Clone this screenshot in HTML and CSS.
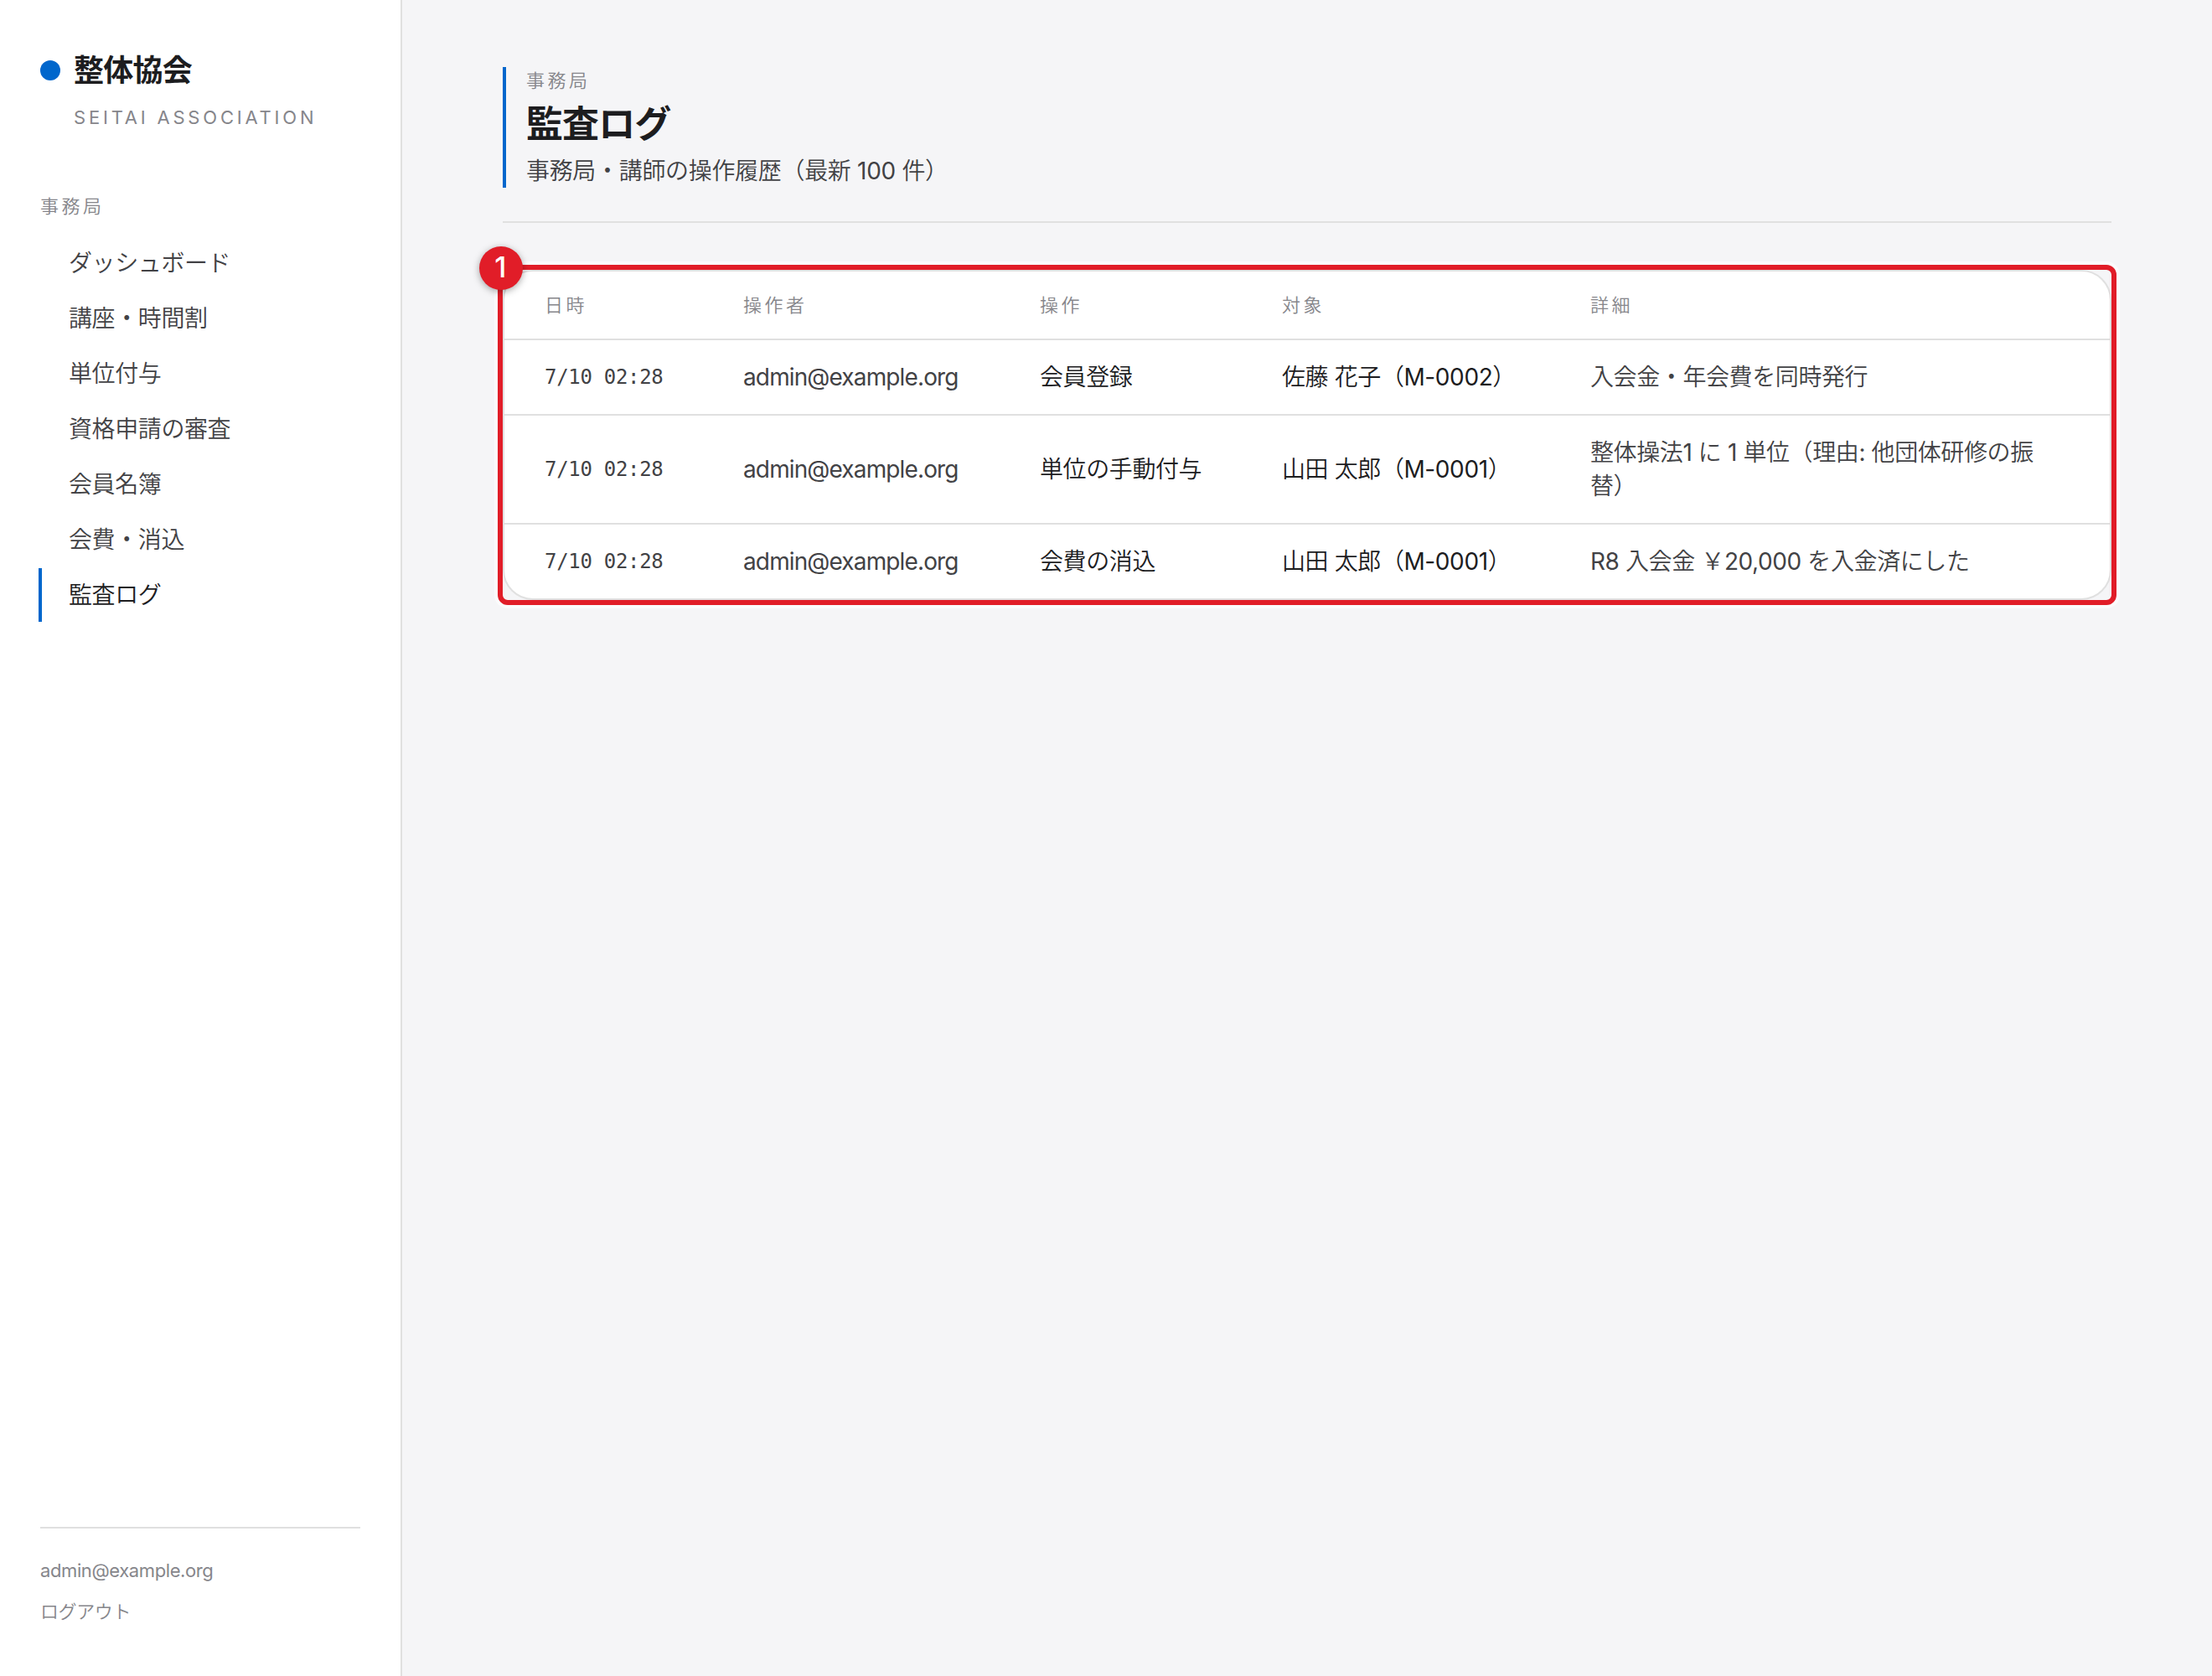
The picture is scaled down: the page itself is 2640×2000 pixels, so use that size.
FILE: index.html
```html
<!DOCTYPE html>
<html lang="ja">
<head>
<meta charset="utf-8">
<title>監査ログ</title>
<link rel="stylesheet" href="styles.css">
</head>
<body>
<div class="app">
  <aside class="sidebar">
    <div class="brand">
      <span class="brand-dot"></span>
      <span class="brand-name">整体協会</span>
    </div>
    <div class="brand-sub">SEITAI ASSOCIATION</div>
    <div class="nav-label">事務局</div>
    <nav class="nav">
      <a class="nav-item">ダッシュボード</a>
      <a class="nav-item">講座・時間割</a>
      <a class="nav-item">単位付与</a>
      <a class="nav-item">資格申請の審査</a>
      <a class="nav-item">会員名簿</a>
      <a class="nav-item">会費・消込</a>
      <a class="nav-item active">監査ログ</a>
    </nav>
    <div class="account">
      <div class="account-mail">admin@example.org</div>
      <a class="logout">ログアウト</a>
    </div>
  </aside>
  <main class="main">
    <header class="page-header">
      <div class="heading">
        <div class="eyebrow">事務局</div>
        <h1 class="title">監査ログ</h1>
        <p class="lead">事務局・講師の操作履歴（最新 100 件）</p>
      </div>
    </header>
    <section class="callout">
      <div class="card">
        <table class="log">
          <colgroup><col class="c-time"><col class="c-user"><col class="c-action"><col class="c-target"><col></colgroup>
          <thead>
            <tr><th>日時</th><th>操作者</th><th>操作</th><th>対象</th><th>詳細</th></tr>
          </thead>
          <tbody>
            <tr><td class="time">7/10 02:28</td><td class="user">admin@example.org</td><td>会員登録</td><td>佐藤 花子（M-0002）</td><td class="detail">入会金・年会費を同時発行</td></tr>
            <tr><td class="time">7/10 02:28</td><td class="user">admin@example.org</td><td>単位の手動付与</td><td>山田 太郎（M-0001）</td><td class="detail">整体操法1 に 1 単位（理由: 他団体研修の振替）</td></tr>
            <tr><td class="time">7/10 02:28</td><td class="user">admin@example.org</td><td>会費の消込</td><td>山田 太郎（M-0001）</td><td class="detail">R8 入会金 ￥20,000 を入金済にした</td></tr>
          </tbody>
        </table>
      </div>
      <span class="callout-frame"></span>
      <span class="callout-badge">1</span>
    </section>
  </main>
</div>
</body>
</html>
```
FILE: styles.css
```css
* { box-sizing: border-box; }

body {
  margin: 0;
  background: #f5f5f7;
  color: #1d1d1f;
  font-family: Inter, "Noto Sans CJK JP DemiLight", "Noto Sans CJK JP Light", "Noto Sans CJK JP", sans-serif;
  font-size: 28px;
  line-height: 40px;
  letter-spacing: -0.4px;
}

.app { display: flex; min-height: 2000px; }

.sidebar {
  display: flex;
  flex-direction: column;
  width: 480px;
  padding: 56px 48px;
  background: #fff;
  border-right: 2px solid #e0e0e0;
}

.brand { display: flex; align-items: center; gap: 16px; height: 56px; }
.brand-dot { width: 24px; height: 24px; border-radius: 50%; background: #0066cc; }
.brand-name { margin-top: -7px; font-family: "Noto Sans CJK JP", sans-serif; font-size: 36px; font-weight: 700; letter-spacing: -0.72px; }
.brand-sub {
  margin-top: 12px;
  padding-left: 40px;
  font-size: 22px;
  line-height: 32px;
  letter-spacing: 3.8px;
  color: #86868b;
  white-space: nowrap;
}

.nav-label, .eyebrow {
  font-size: 22px;
  line-height: 32px;
  letter-spacing: 3.5px;
  color: #86868b;
}
.nav-label { margin-top: 74px; }

.nav { display: flex; flex-direction: column; gap: 2px; margin: 20px 0 0 -2px; }
.nav-item {
  height: 64px;
  padding-left: 32px;
  border-left: 4px solid transparent;
  line-height: 64px;
  color: #424245;
}
.nav-item.active { border-left-color: #0066cc; color: #1d1d1f; }

.account {
  margin-top: auto;
  height: 122px;
  padding-top: 34px;
  border-top: 2px solid #e0e0e0;
  font-size: 22px;
  line-height: 32px;
  letter-spacing: -0.4px;
  color: #86868b;
}
.logout { display: block; margin-top: 17px; }

.main { flex: 1; padding: 80px 120px; }

.page-header { padding-bottom: 40px; border-bottom: 2px solid #e0e0e0; }
.heading { height: 144px; padding-left: 24px; border-left: 4px solid #0066cc; }
.title { margin: 3px 0 7px; font-family: "Noto Sans CJK JP", sans-serif; font-size: 44px; line-height: 60px; font-weight: 700; letter-spacing: -0.88px; }
.lead { margin: 0; line-height: 44px; letter-spacing: -0.32px; color: #424245; }

.callout { position: relative; margin-top: 56px; }
.card {
  overflow: hidden;
  background: #fff;
  border: 2px solid #e0e0e0;
  border-radius: 36px;
}
.log { width: 100%; table-layout: fixed; border-collapse: separate; border-spacing: 0; }
.c-time { width: 237px; }
.c-user { width: 354px; }
.c-action { width: 289px; }
.c-target { width: 368px; }
.log th, .log td { padding: 24px 48px; text-align: left; white-space: nowrap; vertical-align: middle; border-bottom: 2px solid #e0e0e0; }
.log th { font-size: 22px; line-height: 32px; font-weight: 400; letter-spacing: 3.5px; color: #86868b; }
.log tbody tr:last-child td { border-bottom: 0; }
.log .time { font-family: "DejaVu Sans Mono", monospace; font-size: 24px; letter-spacing: -0.3px; color: #424245; }
.log .user { letter-spacing: -0.87px; color: #424245; }
.log .detail { padding-right: 80px; white-space: normal; color: #424245; }

.callout-frame {
  position: absolute;
  inset: -6px;
  border: 6px solid #e11d28;
  border-radius: 12px;
  box-shadow: 0 0 0 4px rgba(255, 255, 255, 0.6);
}
.callout-badge {
  position: absolute;
  top: -28px;
  left: -28px;
  width: 52px;
  height: 52px;
  padding-right: 2px;
  border-radius: 50%;
  background: #e11d28;
  box-shadow: 0 2px 8px rgba(0, 0, 0, 0.35);
  color: #fff;
  font-size: 34px;
  line-height: 50px;
  font-weight: 500;
  text-align: center;
}
```
